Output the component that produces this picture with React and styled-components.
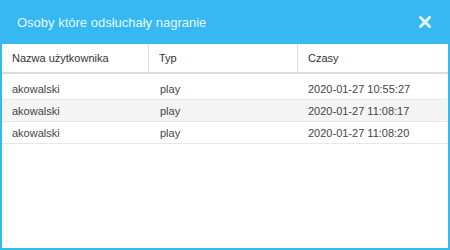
import React from "react";
import styled, { createGlobalStyle } from "styled-components";

const rows = [
   { user: "akowalski", type: "play", time: "2020-01-27 10:55:27" },
   { user: "akowalski", type: "play", time: "2020-01-27 11:08:17" },
   { user: "akowalski", type: "play", time: "2020-01-27 11:08:20" },
];

const App = () => {
   return (
      <>
         <GlobalStyle />
         <Modal>
            <Header>
               <Title>Osoby które odsłuchały nagranie</Title>
               <Close aria-label="close">
                  <svg width="12" height="12" viewBox="0 0 12 12">
                     <path
                        d="M1.5 1.5 L10.5 10.5 M10.5 1.5 L1.5 10.5"
                        stroke="currentColor"
                        strokeWidth="3"
                        strokeLinecap="square"
                     />
                  </svg>
               </Close>
            </Header>
            <Body>
               <HeadRow>
                  <HeadCell>Nazwa użytkownika</HeadCell>
                  <HeadCell>Typ</HeadCell>
                  <HeadCell last>Czasy</HeadCell>
               </HeadRow>
               <Rows>
                  {rows.map((r, i) => (
                     <Row key={i} striped={i % 2 === 1}>
                        <Cell>{r.user}</Cell>
                        <Cell>{r.type}</Cell>
                        <Cell>{r.time}</Cell>
                     </Row>
                  ))}
               </Rows>
            </Body>
         </Modal>
      </>
   );
};

export default App;

const GlobalStyle = createGlobalStyle`
   html, body {
      margin: 0;
      padding: 0;
      background: #fff;
   }
   body {
      font-family: "Liberation Sans", Arial, sans-serif;
   }
`;

// blue frame - the header plus a 2px border round the white body
const Modal = styled.div`
   width: 450px;
   height: 250px;
   box-sizing: border-box;
   background: #36b9f3;
   display: flex;
   flex-direction: column;
   padding: 0 2px 2px;
`;

const Header = styled.div`
   height: 44px;
   flex-shrink: 0;
   display: flex;
   align-items: center;
   justify-content: space-between;
   padding: 0 17px 0 15px;
`;

const Title = styled.div`
   color: rgba(255, 255, 255, 0.9);
   font-size: 13px;
`;

const Close = styled.div`
   color: rgba(255, 255, 255, 0.85);
   display: flex;
   align-items: center;
`;

const Body = styled.div`
   flex: 1;
   background: #fff;
`;

const Columns = styled.div`
   display: grid;
   grid-template-columns: 147px 149px 1fr;
`;

const HeadRow = styled(Columns)`
   height: 28px;
   border-bottom: 2px solid #dcdcdc;
`;

const HeadCell = styled.div`
   display: flex;
   align-items: center;
   padding-left: 10px;
   font-size: 11px;
   color: #333;
   border-right: ${(p) => (p.last ? "none" : "1px solid #dcdcdc")};
`;

const Rows = styled.div`
   padding-top: 4px;
`;

const Row = styled(Columns)`
   height: 22px;
   box-sizing: border-box;
   border-bottom: 1px solid #e8e8e8;
   background: ${(p) => (p.striped ? "#f4f4f4" : "#fff")};
`;

const Cell = styled.div`
   display: flex;
   align-items: center;
   padding-left: 10px;
   font-size: 11px;
   color: #444;
   &:nth-child(2) {
      padding-left: 11px;
   }
`;
